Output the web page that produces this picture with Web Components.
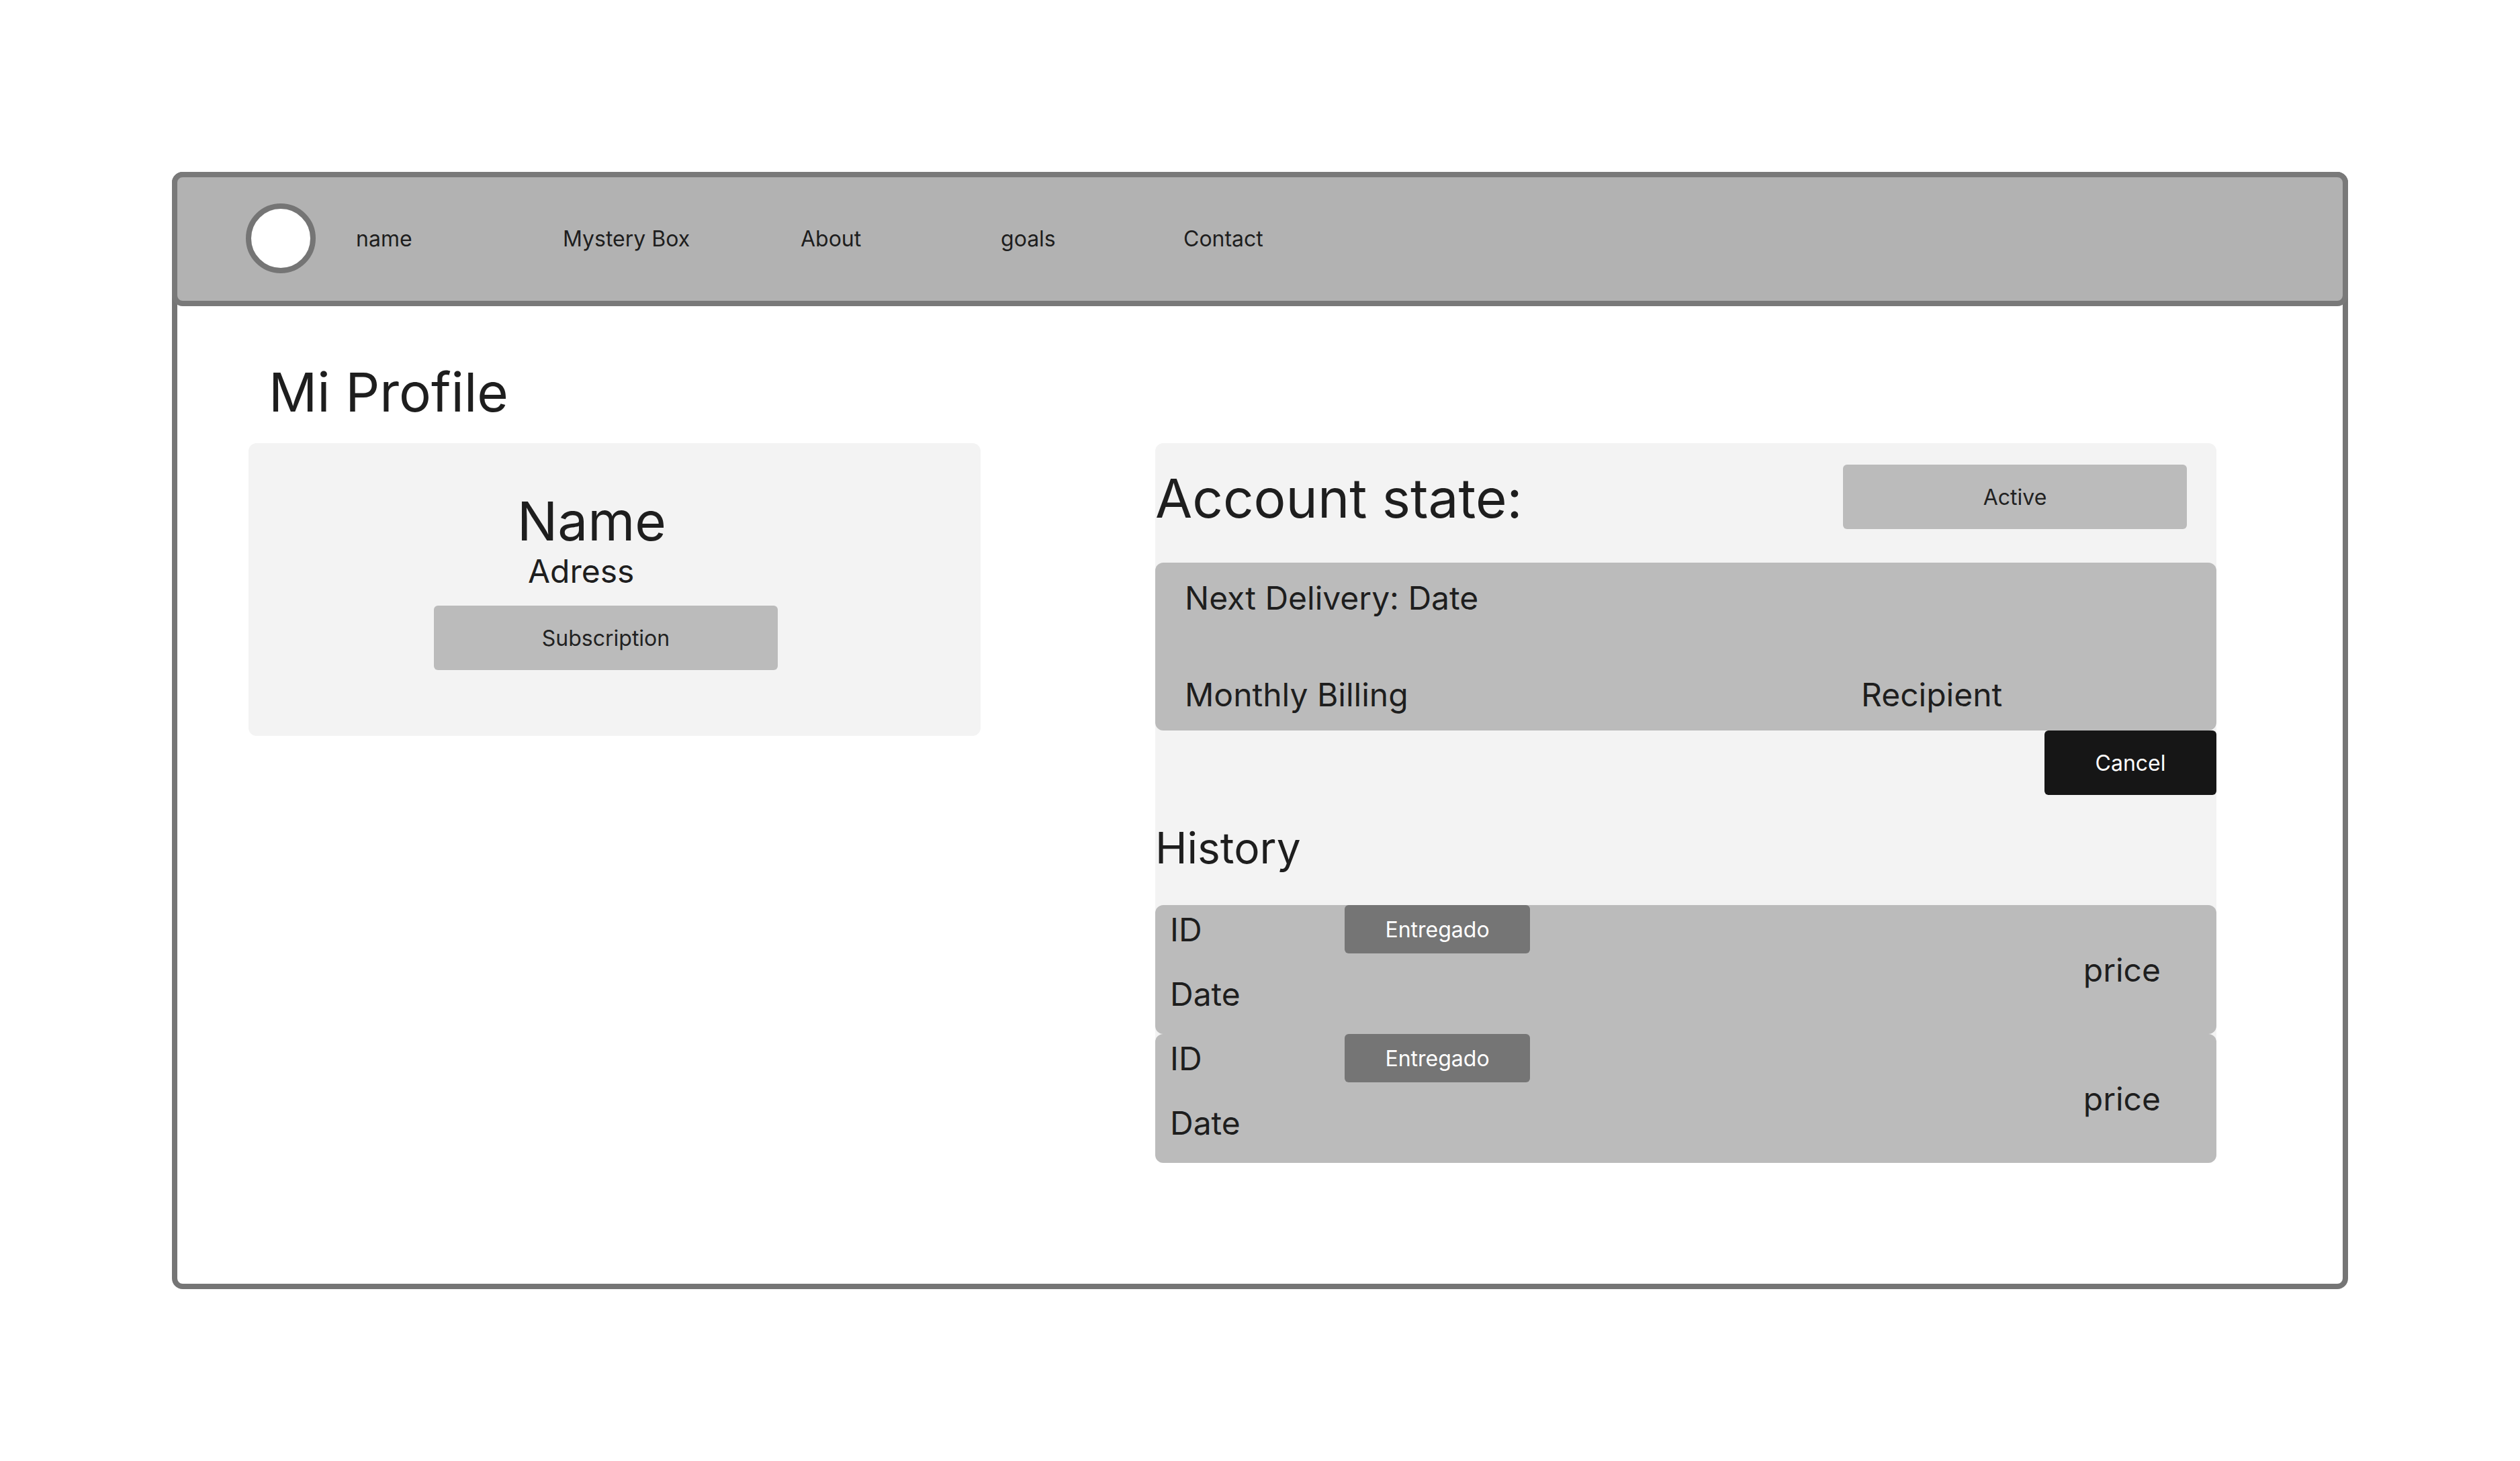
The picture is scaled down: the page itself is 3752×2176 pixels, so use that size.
<!DOCTYPE html>
<html lang="en">
<head>
<meta charset="utf-8">
<meta name="viewport" content="width=device-width, initial-scale=1">
<title>Mi Profile</title>
<style>
  *, *::before, *::after { box-sizing: border-box; }
  body {
    --line: #757575;
    --panel: #f3f3f3;
    --block: #bbbbbb;
    --ink: #1e1e1e;
    margin: 0;
    min-height: 100vh;
    padding: 256px;
    display: flex;
    background: #fff;
    color: var(--ink);
    font: 400 32px/48px Inter, "Liberation Sans", sans-serif;
  }
</style>
</head>
<body>
<app-frame>
  <site-header slot="header"></site-header>
  <page-title slot="title">Mi Profile</page-title>
  <profile-card>
    <span slot="name">Name</span>
    <span slot="address">Adress</span>
    <ui-button slot="action" tone="soft">Subscription</ui-button>
  </profile-card>
  <account-panel>
    <delivery-summary slot="summary"></delivery-summary>
    <history-item slot="history"></history-item>
    <history-item slot="history"></history-item>
  </account-panel>
</app-frame>

<script>
  const define = (name, html) => {
    const template = document.createElement("template");
    template.innerHTML = "<style>*,*::before,*::after{box-sizing:border-box}h1,h2,h3,p{margin:0;font-weight:inherit}</style>" + html;
    customElements.define(name, class extends HTMLElement {
      constructor() {
        super();
        this.attachShadow({ mode: "open" }).append(template.content.cloneNode(true));
      }
    });
  };

  define("ui-button", `
    <style>
      :host { display: block; }
      button {
        display: block; width: 100%; height: 96px; margin: 0; padding: 2px 0 0;
        border: 0; border-radius: 6px;
        background: var(--block); color: #222; font: inherit; cursor: pointer;
      }
      :host([tone="dark"]) button { background: #161616; color: #fff; }
      :host([tone="status"]) button { height: 72px; background: var(--line); color: #fff; }
    </style>
    <button type="button"><slot></slot></button>`);

  define("site-header", `
    <style>
      :host { display: block; }
      header {
        display: flex; align-items: center; gap: 60px;
        height: 200px; padding: 39px 102px 41px;
        border: 8px solid #797979; border-radius: 16px; background: #b2b2b2;
      }
      .avatar {
        flex: none; width: 104px; height: 104px;
        border: 8px solid var(--line); border-radius: 50%; background: #fff;
      }
      nav { display: grid; grid-template-columns: 308px 354px 298px 272px auto; padding-top: 2px; }
      a { color: inherit; text-decoration: none; justify-self: start; }
    </style>
    <header>
      <span class="avatar"></span>
      <nav>
        <a href="#name">name</a>
        <a href="#mystery-box">Mystery Box</a>
        <a href="#about">About</a>
        <a href="#goals">goals</a>
        <a href="#contact">Contact</a>
      </nav>
    </header>`);

  define("page-title", `
    <style>
      :host { display: block; }
      h1 { padding-left: 30px; font-size: 80px; line-height: 96px; }
    </style>
    <h1><slot></slot></h1>`);

  define("app-frame", `
    <style>
      :host {
        display: block; flex: 1; min-width: 0;
        border: 8px solid var(--line); border-radius: 16px; background: #fff;
      }
      ::slotted([slot="header"]) { margin: -8px; }
      main { padding: 88px 188px 80px 106px; }
      .columns {
        display: grid; grid-template-columns: 109fr 158fr; gap: 260px;
        align-items: start; margin-top: 28px;
      }
    </style>
    <slot name="header"></slot>
    <main>
      <slot name="title"></slot>
      <div class="columns"><slot></slot></div>
    </main>`);

  define("profile-card", `
    <style>
      :host { display: block; }
      section { padding: 68px 302px 98px 276px; border-radius: 12px; background: var(--panel); }
      h2 { padding-left: 124px; font-size: 80px; line-height: 96px; }
      p { padding-left: 140px; margin-bottom: 24px; font-size: 48px; line-height: 54px; }
    </style>
    <section>
      <h2><slot name="name"></slot></h2>
      <p><slot name="address"></slot></p>
      <slot name="action"></slot>
    </section>`);

  define("account-panel", `
    <style>
      :host { display: block; }
      section { border-radius: 12px; background: var(--panel); }
      .state {
        display: flex; justify-content: space-between; align-items: flex-start;
        padding: 32px 44px 46px 0;
      }
      h2 { font-size: 80px; line-height: 100px; }
      h3 { padding: 39px 0 45px; font-size: 64px; line-height: 80px; }
      .state ui-button { width: 512px; }
      .actions { display: flex; justify-content: flex-end; }
      .actions ui-button { width: 256px; }
    </style>
    <section>
      <div class="state">
        <h2>Account state:</h2>
        <ui-button tone="soft">Active</ui-button>
      </div>
      <slot name="summary"></slot>
      <div class="actions"><ui-button tone="dark">Cancel</ui-button></div>
      <h3>History</h3>
      <slot name="history"></slot>
    </section>`);

  define("delivery-summary", `
    <style>
      :host { display: block; font-size: 48px; line-height: 56px; }
      div {
        display: grid; grid-template-columns: 1fr 485px; row-gap: 88px;
        padding: 25px 44px; border-radius: 12px; background: var(--block);
      }
      .next { grid-column: 1 / -1; }
    </style>
    <div>
      <p class="next">Next Delivery: Date</p>
      <p>Monthly Billing</p>
      <p>Recipient</p>
    </div>`);

  define("history-item", `
    <style>
      :host { display: block; }
      article {
        display: grid; grid-template-columns: 260px 276px 1fr;
        padding: 0 83px 0 22px; border-radius: 12px; background: var(--block);
      }
      .order {
        display: grid; row-gap: 38px; padding: 8px 0 30px;
        font-size: 48px; line-height: 58px;
      }
      .price { justify-self: end; align-self: center; padding-top: 2px; font-size: 48px; line-height: 58px; }
    </style>
    <article>
      <div class="order"><p>ID</p><p>Date</p></div>
      <ui-button tone="status">Entregado</ui-button>
      <p class="price">price</p>
    </article>`);
</script>
</body>
</html>
